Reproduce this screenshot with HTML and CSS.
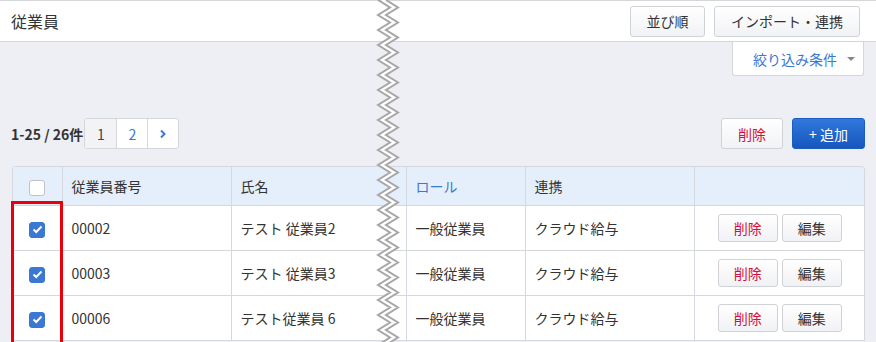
FILE: index.html
```html
<!DOCTYPE html>
<html lang="ja">
<head>
  <meta charset="UTF-8" />
  <title>従業員</title>
  <link rel="stylesheet" href="styles.css">
</head>
<body>
  <header class="topbar">
    <h1>従業員</h1>
    <div class="topbar-actions">
      <button class="btn btn-sort">並び順</button>
      <button class="btn btn-import">インポート・連携</button>
    </div>
  </header>

  <div class="filter-row">
    <div class="filter">絞り込み条件 <span class="caret"></span></div>
  </div>

  <div class="toolbar">
    <div class="paging">
      <span class="count">1-25 / 26件</span>
      <div class="pager">
        <span class="page current">1</span>
        <span class="page">2</span>
        <span class="page next">
          <svg width="8" height="10" viewBox="0 0 8 10"><polyline points="2,1.5 5.5,5 2,8.5" fill="none" stroke="#3b78d0" stroke-width="2"/></svg>
        </span>
      </div>
    </div>
    <div class="toolbar-actions">
      <button class="btn btn-delete">削除</button>
      <button class="btn btn-add">+ 追加</button>
    </div>
  </div>

  <div class="table-wrap">
    <table class="list">
      <colgroup>
        <col class="c-check"><col class="c-no"><col class="c-name"><col class="c-role"><col class="c-link"><col>
      </colgroup>
      <thead>
        <tr>
          <th class="check"><span class="box"></span></th>
          <th>従業員番号</th>
          <th>氏名</th>
          <th class="sortable">ロール</th>
          <th>連携</th>
          <th></th>
        </tr>
      </thead>
      <tbody>
        <tr>
          <td class="check"><span class="box checked"><svg width="11" height="9" viewBox="0 0 11 9"><polyline points="1.5,4.5 4.2,7 9.5,1.5" fill="none" stroke="#fff" stroke-width="2"/></svg></span></td>
          <td>00002</td>
          <td>テスト 従業員2</td>
          <td>一般従業員</td>
          <td>クラウド給与</td>
          <td class="ops"><button class="btn btn-sm btn-delete">削除</button><button class="btn btn-sm">編集</button></td>
        </tr>
        <tr>
          <td class="check"><span class="box checked"><svg width="11" height="9" viewBox="0 0 11 9"><polyline points="1.5,4.5 4.2,7 9.5,1.5" fill="none" stroke="#fff" stroke-width="2"/></svg></span></td>
          <td>00003</td>
          <td>テスト 従業員3</td>
          <td>一般従業員</td>
          <td>クラウド給与</td>
          <td class="ops"><button class="btn btn-sm btn-delete">削除</button><button class="btn btn-sm">編集</button></td>
        </tr>
        <tr>
          <td class="check"><span class="box checked"><svg width="11" height="9" viewBox="0 0 11 9"><polyline points="1.5,4.5 4.2,7 9.5,1.5" fill="none" stroke="#fff" stroke-width="2"/></svg></span></td>
          <td>00006</td>
          <td>テスト従業員 6</td>
          <td>一般従業員</td>
          <td>クラウド給与</td>
          <td class="ops"><button class="btn btn-sm btn-delete">削除</button><button class="btn btn-sm">編集</button></td>
        </tr>
      </tbody>
    </table>
  </div>

  <!-- cut marker over the page -->
  <svg class="cut" width="26" height="342" viewBox="0 0 26 342">
    <polyline fill="none" stroke="#fff" stroke-width="6" points="6,0 18,7.5 6,15 18,22.5 6,30 18,37.5 6,45 18,52.5 6,60 18,67.5 6,75 18,82.5 6,90 18,97.5 6,105 18,112.5 6,120 18,127.5 6,135 18,142.5 6,150 18,157.5 6,165 18,172.5 6,180 18,187.5 6,195 18,202.5 6,210 18,217.5 6,225 18,232.5 6,240 18,247.5 6,255 18,262.5 6,270 18,277.5 6,285 18,292.5 6,300 18,307.5 6,315 18,322.5 6,330 18,337.5 6,345"/>
    <polyline fill="none" stroke="#a6a6a6" stroke-width="2" points="2,0 14,7.5 2,15 14,22.5 2,30 14,37.5 2,45 14,52.5 2,60 14,67.5 2,75 14,82.5 2,90 14,97.5 2,105 14,112.5 2,120 14,127.5 2,135 14,142.5 2,150 14,157.5 2,165 14,172.5 2,180 14,187.5 2,195 14,202.5 2,210 14,217.5 2,225 14,232.5 2,240 14,247.5 2,255 14,262.5 2,270 14,277.5 2,285 14,292.5 2,300 14,307.5 2,315 14,322.5 2,330 14,337.5 2,345"/>
    <polyline fill="none" stroke="#a6a6a6" stroke-width="2" points="10,0 22,7.5 10,15 22,22.5 10,30 22,37.5 10,45 22,52.5 10,60 22,67.5 10,75 22,82.5 10,90 22,97.5 10,105 22,112.5 10,120 22,127.5 10,135 22,142.5 10,150 22,157.5 10,165 22,172.5 10,180 22,187.5 10,195 22,202.5 10,210 22,217.5 10,225 22,232.5 10,240 22,247.5 10,255 22,262.5 10,270 22,277.5 10,285 22,292.5 10,300 22,307.5 10,315 22,322.5 10,330 22,337.5 10,345"/>
  </svg>

  <!-- highlight annotation -->
  <div class="mark"></div>
</body>
</html>
```

FILE: styles.css
```css
* {
  box-sizing: border-box;
}

body {
  margin: 0;
  height: 342px;
  overflow: hidden;
  position: relative;
  font-family: "Noto Sans CJK JP", "Noto Sans", sans-serif;
  font-size: 14px;
  color: #333;
  background-color: #eeeff4;
}

.topbar {
  height: 42px;
  display: flex;
  justify-content: space-between;
  align-items: center;
  padding: 0 16px 0 11px;
  background-color: #fff;
  border-top: 1px solid #d5d6da;
  border-bottom: 1px solid #d5d6da;
}

.topbar h1 {
  margin: 0;
  font-size: 16px;
  font-weight: normal;
}

.topbar-actions {
  display: flex;
  gap: 9px;
}

.btn {
  height: 31px;
  padding: 0;
  font-family: inherit;
  font-size: 14px;
  color: #333;
  background: linear-gradient(#fff, #f1f2f5);
  border: 1px solid #cfd2d7;
  border-radius: 3px;
}

.btn-sort {
  width: 75px;
}

.btn-import {
  width: 146px;
}

.filter-row {
  display: flex;
  justify-content: flex-end;
  padding-right: 12px;
}

.filter {
  width: 132px;
  height: 34px;
  display: flex;
  align-items: center;
  padding-left: 20px;
  color: #3b78d0;
  background-color: #fff;
  border: 1px solid #d5d6da;
  border-top: none;
  border-radius: 0 0 3px 3px;
}

.caret {
  margin-left: 10px;
  width: 0;
  height: 0;
  border-left: 4px solid transparent;
  border-right: 4px solid transparent;
  border-top: 4px solid #888;
}

.toolbar {
  margin-top: 42px;
  height: 31px;
  display: flex;
  justify-content: space-between;
  align-items: center;
  padding: 0 11px 0 11px;
}

.paging {
  display: flex;
  align-items: center;
  gap: 1px;
}

.count {
  font-weight: bold;
}

.pager {
  display: flex;
  height: 31px;
  background-color: #fff;
  border: 1px solid #d5d6da;
  border-radius: 3px;
  overflow: hidden;
}

.page {
  width: 31px;
  display: flex;
  align-items: center;
  justify-content: center;
  color: #3b78d0;
  border-left: 1px solid #d5d6da;
}

.page.current {
  border-left: none;
  color: #444;
  background-color: #f3f3f5;
}

.toolbar-actions {
  display: flex;
  gap: 9px;
}

.btn-delete {
  color: #d50f38;
}

.toolbar-actions .btn-delete {
  width: 62px;
}

.btn-add {
  width: 73px;
  color: #fff;
  background: linear-gradient(#3078dc, #1657bd);
  border-color: #1a5cc4;
}

.table-wrap {
  margin: 17px 11px 0 12px;
  background-color: #fff;
  border: 1px solid #d5d9df;
  border-bottom: none;
  border-radius: 4px 4px 0 0;
  overflow: hidden;
}

.list {
  width: 100%;
  table-layout: fixed;
  border-collapse: collapse;
}

.c-check { width: 49px; }
.c-no { width: 169px; }
.c-name { width: 175px; }
.c-role { width: 119px; }
.c-link { width: 169px; }

.list th,
.list td {
  padding: 0 0 0 9px;
  text-align: left;
  font-weight: normal;
  border-left: 1px solid #d5d9df;
  border-bottom: 1px solid #d5d9df;
  white-space: nowrap;
}

.list th:first-child,
.list td:first-child {
  border-left: none;
}

.list th {
  height: 38px;
  background-color: #e5effc;
}

.list td {
  height: 45px;
}

.list th.sortable {
  color: #3b78d0;
}

.list .check {
  padding: 0;
  text-align: center;
}

.box {
  display: inline-flex;
  align-items: center;
  justify-content: center;
  width: 16px;
  height: 16px;
  vertical-align: middle;
  background-color: #fff;
  border: 1px solid #bfc3c9;
  border-radius: 3px;
}

.box.checked {
  background-color: #3a78d4;
  border-color: #3a78d4;
}

.list .ops {
  padding: 0 0 0 1px;
  text-align: center;
}

.btn-sm {
  width: 60px;
  height: 28px;
  margin: 0 2px;
}

.cut {
  position: absolute;
  top: 0;
  left: 376px;
}

.mark {
  position: absolute;
  left: 11px;
  top: 201px;
  width: 52px;
  height: 160px;
  border: 3px solid #e8000b;
}
```
